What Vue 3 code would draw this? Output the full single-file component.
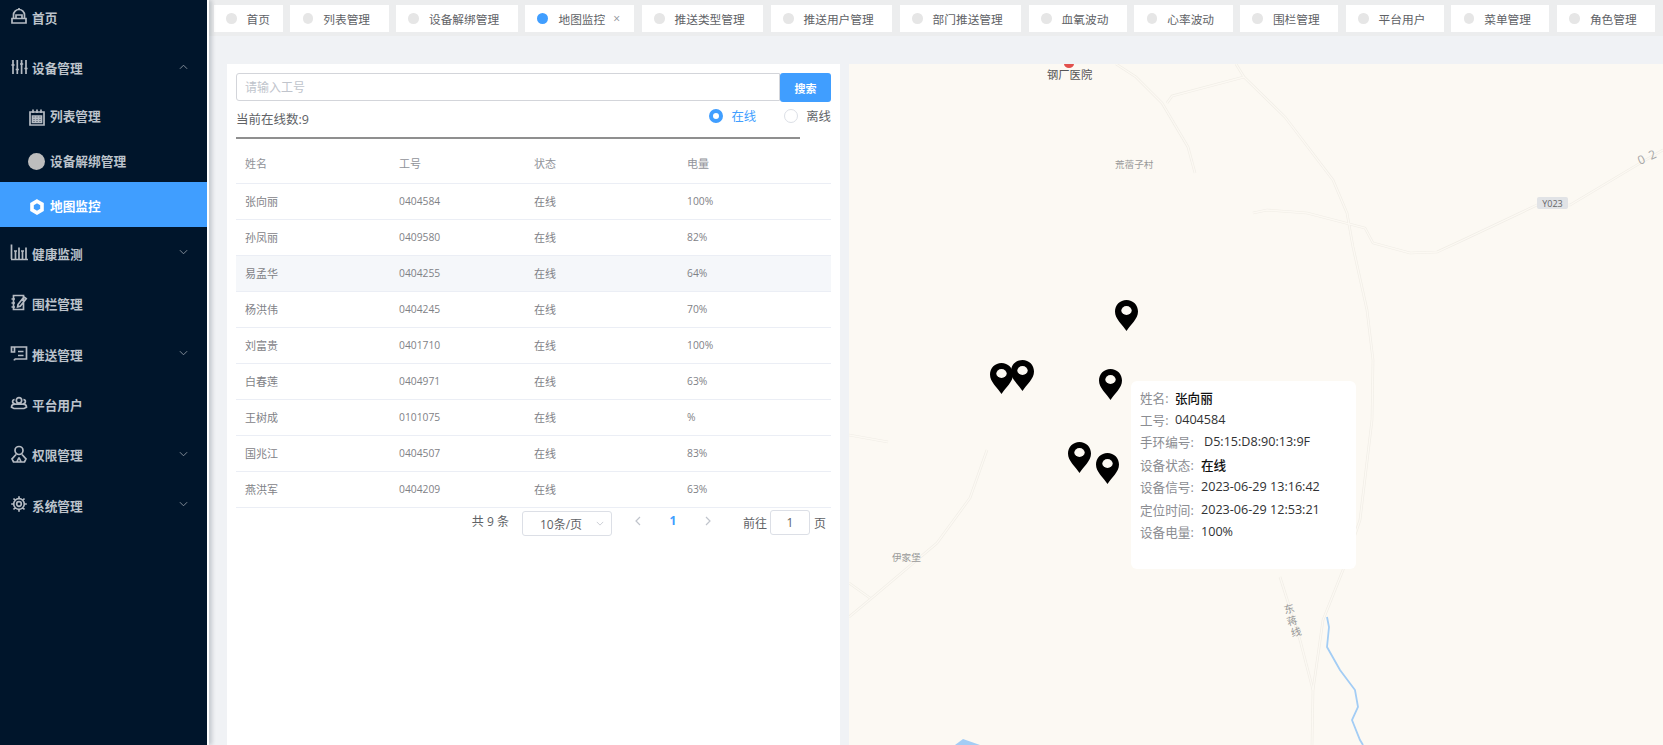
<script setup>
import { ref } from 'vue'

const icons = {
  home: 'M2 16h14v-4.5H2z M3.5 11.5V8a5.5 5.5 0 0 1 11 0v3.5 M9 2.5V1 M6 8h6v3.5H6z',
  sliders: 'M3 2v14M7.3 2v14M11.6 2v14M16 2v14M1.4 7h3.2M5.7 11.5h3.2M10 6h3.2M14.4 10.5h3.2',
  table: 'M2 4h14v13H2z M5 1.5V5M9 1.5V5M13 1.5V5 M4.5 8h9v6.5h-9z M4.5 10.2h9M4.5 12.3h9M7.5 8v6.5M10.5 8v6.5',
  chart: 'M1.5 1.5v14.5M1 16.5h17M5.5 8v8M9 4.5V16M12.5 8v8M16 4.5V16M4 8h3M11 8h3',
  note: 'M3.5 2.5h10v14h-10z M1.5 6h3.5M1.5 10h3.5M1.5 14h3.5 M8 11.5l6-7.5 2.2 1.7-6 7.5-2.6.6z',
  push: 'M4.5 3H16.5V15H4.5 M1.5 3h3v5h-3z M4.5 15v1.5 M8 7.5h5.5 M8 11.5h5.5',
  users: 'M9 3.6a2.7 2.7 0 1 1 0 5.4a2.7 2.7 0 1 1 0-5.4z M4.6 5.6a2 2 0 1 0 0 4 M13.4 5.6a2 2 0 1 1 0 4 M1.5 13.2c0-2 1.8-3 3.5-3h8c1.7 0 3.5 1 3.5 3l-2.5 1.3h-10z',
  person: 'M9 1.5a4 4 0 1 1 0 8a4 4 0 1 1 0-8z M6 9.5l-4 4.5 1.5 3h11l1.5-3-4-4.5 M9 12.5L6.8 17M9 12.5l2.2 4.5',
  gear: 'M9 6.7a2.3 2.3 0 1 1 0 4.6a2.3 2.3 0 1 1 0-4.6z M9 3.7a5.3 5.3 0 1 1 0 10.6a5.3 5.3 0 1 1 0-10.6z M9 1.2v2.5M9 14.3v2.5M1.2 9h2.5M14.3 9h2.5M3.5 3.5l1.8 1.8M12.7 12.7l1.8 1.8M3.5 14.5l1.8-1.8M12.7 5.3l1.8-1.8'
}

const menu = [
  { name: '首页', icon: 'home' },
  { name: '设备管理', icon: 'sliders', arrow: 'up', open: true },
  { name: '健康监测', icon: 'chart', arrow: 'down' },
  { name: '围栏管理', icon: 'note' },
  { name: '推送管理', icon: 'push', arrow: 'down' },
  { name: '平台用户', icon: 'users' },
  { name: '权限管理', icon: 'person', arrow: 'down' },
  { name: '系统管理', icon: 'gear', arrow: 'down' }
]

const tags = [
  { name: '首页', short: true }, { name: '列表管理' }, { name: '设备解绑管理' },
  { name: '地图监控', active: true }, { name: '推送类型管理' }, { name: '推送用户管理' },
  { name: '部门推送管理' }, { name: '血氧波动' }, { name: '心率波动' }, { name: '围栏管理' },
  { name: '平台用户' }, { name: '菜单管理' }, { name: '角色管理' }, { name: '' }
]

const rows = [
  ['张向丽', '0404584', '100%'],
  ['孙凤丽', '0409580', '82%'],
  ['易孟华', '0404255', '64%'],
  ['杨洪伟', '0404245', '70%'],
  ['刘富贵', '0401710', '100%'],
  ['白春莲', '0404971', '63%'],
  ['王树成', '0101075', '%'],
  ['国兆江', '0404507', '83%'],
  ['燕洪军', '0404209', '63%']
]

const hovered = ref(2)

// pin tops/lefts are relative to the map box
const pins = [
  { x: 266, y: 236 }, { x: 141, y: 299 }, { x: 162, y: 296 },
  { x: 250, y: 305 }, { x: 219, y: 378 }, { x: 247, y: 389 }
]

const info = [
  { label: '姓名:', value: '张向丽', strong: true },
  { label: '工号:', value: '0404584' },
  { label: '手环编号:', value: 'D5:15:D8:90:13:9F' },
  { label: '设备状态:', value: '在线', strong: true },
  { label: '设备信号:', value: '2023-06-29 13:16:42' },
  { label: '定位时间:', value: '2023-06-29 12:53:21' },
  { label: '设备电量:', value: '100%' }
]

const roads = [
  'M1116 64L1136 77L1162 103L1188 147L1195 173',
  'M1236 64L1244 77L1285 117L1333 180L1347 213L1353 247L1367 310L1373 360L1372 420L1360 520L1343 570L1323 620L1313 690L1312 745',
  'M1167 103L1172 96L1244 77',
  'M1253 213L1267 210L1307 213L1365 228L1373 243L1410 253L1437 252L1463 240L1537 205L1570 205L1637 165L1663 150',
  'M987 450L970 498L937 543L873 597L849 617',
  'M849 583L870 598',
  'M849 435L888 442',
  'M1280 577L1300 640L1313 690'
]
</script>

<template>
  <div class="layout">
    <aside class="sidebar">
      <ul class="menu">
        <template v-for="item in menu" :key="item.name">
          <li class="menu-item">
            <svg class="ico" viewBox="0 0 18 18"><path :d="icons[item.icon]" /></svg>
            <span class="label">{{ item.name }}</span>
            <svg v-if="item.arrow" class="arrow" viewBox="0 0 10 6">
              <path :d="item.arrow == 'up' ? 'M1 5l4-4 4 4' : 'M1 1l4 4 4-4'" />
            </svg>
          </li>
          <template v-if="item.open">
            <li class="sub-item">
              <svg class="ico" viewBox="0 0 18 18"><path :d="icons.table" /></svg>
              <span class="label">列表管理</span>
            </li>
            <li class="sub-item">
              <span class="dot-ico"></span>
              <span class="label">设备解绑管理</span>
            </li>
            <li class="sub-item active">
              <svg class="ico hex" viewBox="0 0 18 18"><path d="M9 3.2l5 2.9v5.8l-5 2.9-5-2.9V6.100z" /></svg>
              <span class="label">地图监控</span>
            </li>
          </template>
        </template>
      </ul>
    </aside>

    <div class="main">
      <div class="tags">
        <div v-for="t in tags" :key="t.name" class="tag" :class="{ active: t.active, short: t.short }">
          <i class="tag-dot"></i>
          <span>{{ t.name }}</span>
          <span v-if="t.active" class="tag-close">×</span>
        </div>
      </div>

      <div class="content">
        <section class="card">
          <div class="search">
            <input class="search-input" placeholder="请输入工号" />
            <button class="search-btn">搜索</button>
          </div>
          <div class="status">
            <span class="count">当前在线数:9</span>
            <div class="radios">
              <label class="radio on"><i></i>在线</label>
              <label class="radio"><i></i>离线</label>
            </div>
          </div>
          <div class="rule"></div>

          <table class="grid">
            <colgroup>
              <col style="width: 154px" />
              <col style="width: 135px" />
              <col style="width: 153px" />
              <col />
            </colgroup>
            <thead>
              <tr><th>姓名</th><th>工号</th><th>状态</th><th>电量</th></tr>
            </thead>
            <tbody>
              <tr v-for="(r, i) in rows" :key="r[1]" :class="{ hover: hovered == i }">
                <td>{{ r[0] }}</td>
                <td class="num">{{ r[1] }}</td>
                <td>在线</td>
                <td class="num">{{ r[2] }}</td>
              </tr>
            </tbody>
          </table>

          <div class="pager">
            <span class="total">共 9 条</span>
            <div class="size">
              <span>10条/页</span>
              <svg viewBox="0 0 10 6"><path d="M1 1l4 4 4-4" /></svg>
            </div>
            <span class="nav">
              <svg viewBox="0 0 6 10"><path d="M5 1L1 5l4 4" /></svg>
            </span>
            <span class="cur">1</span>
            <span class="nav">
              <svg viewBox="0 0 6 10"><path d="M1 1l4 4-4 4" /></svg>
            </span>
            <span class="goto">前往</span>
            <span class="jump">1</span>
            <span class="page-unit">页</span>
          </div>
        </section>

        <section class="map">
          <svg class="map-base" viewBox="849 64 814 681">
            <g class="road"><path v-for="d in roads" :key="d" :d="d" /></g>
            <g class="road-in"><path v-for="d in roads" :key="d" :d="d" /></g>
            <path class="river" d="M1327 617L1329 627L1327 647L1340 670L1355 690L1358 707L1352 720L1360 740L1363 745" />
            <path class="water" d="M955 745L963 739L980 745z" />
            <path class="hospital" d="M1064 64h10a5 4 0 0 1-10 0z" />
            <rect class="badge" x="1537" y="197" width="31" height="12" rx="2" />
            <text class="t-hospital" x="1047" y="79">钢厂医院</text>
            <text class="t-village" x="1115" y="168">荒蓿子村</text>
            <text class="t-village" x="892" y="561">伊家堡</text>
            <text class="t-badge" x="1552.5" y="206.500">Y023</text>
            <text class="t-line" transform="translate(1640 165) rotate(-25)">0</text>
            <text class="t-line" transform="translate(1651 160) rotate(-25)">2</text>
            <text class="t-road" transform="translate(1285 614) rotate(-15)">东</text>
            <text class="t-road" transform="translate(1288 626) rotate(-15)">蒋</text>
            <text class="t-road" transform="translate(1292 637) rotate(-15)">线</text>
          </svg>

          <svg
            v-for="(p, i) in pins"
            :key="i"
            class="pin"
            viewBox="0 0 23 31"
            :style="{ left: p.x + 'px', top: p.y + 'px' }"
          >
            <path d="M11.5 0C5 0 0 5 0 11.500C0 19 7 24 11.5 31C16 24 23 19 23 11.500C23 5 18 0 11.5 0Z" />
            <ellipse cx="11.5" cy="10.5" rx="5.2" ry="4.4" />
          </svg>

          <div class="info">
            <div v-for="f in info" :key="f.label" class="info-row">
              <span class="info-label">{{ f.label }}</span>
              <span class="info-value" :class="{ strong: f.strong }">{{ f.value }}</span>
            </div>
          </div>
        </section>
      </div>
    </div>
  </div>
</template>

<style>
html, body {
  overflow: hidden;
}
</style>

<style scoped>
* {
  box-sizing: border-box;
}
.layout {
  display: flex;
  height: 745px;
  overflow: hidden;
  font-family: "Open Sans", "Noto Sans CJK SC", sans-serif;
  background: #f0f2f5;
}

/* sidebar */
.sidebar {
  position: relative;
  z-index: 2;
  flex: none;
  width: 209px;
  background: #00152b;
  border-right: 2px solid #fff;
  box-shadow: 3px 0 4px rgba(0, 21, 41, 0.18);
  overflow: hidden;
}
.menu {
  list-style: none;
  margin: -9px 0 0;
  padding: 0;
}
.menu-item,
.sub-item {
  display: flex;
  align-items: center;
  color: #bcc3cb;
  font-size: 12.7px;
  font-weight: 700;
}
.menu-item {
  height: 50.4px;
  padding-left: 10px;
  gap: 4px;
}
.sub-item {
  height: 45px;
  padding-left: 28px;
  gap: 4px;
}
.label {
  padding-top: 2.6px;
}
.ico {
  flex: none;
  width: 18px;
  height: 18px;
  fill: none;
  stroke: #b5bbc3;
  stroke-width: 1.7;
}
.sub-item .ico,
.dot-ico {
  margin-top: 5px;
}
.dot-ico {
  flex: none;
  width: 17px;
  height: 17px;
  margin-right: 1px;
  border-radius: 50%;
  background: #bdbdbd;
}
.arrow {
  width: 9px;
  height: 6px;
  margin-left: auto;
  margin-right: 19px;
  fill: none;
  stroke: #8d97a3;
  stroke-width: 1;
}
.sub-item.active {
  background: #409eff;
  color: #fff;
}
.sub-item .ico.hex {
  stroke: #fff;
  stroke-width: 3.6;
}

/* tag bar */
.main {
  flex: 1;
  min-width: 0;
  display: flex;
  flex-direction: column;
}
.tags {
  flex: none;
  display: flex;
  gap: 7.4px;
  height: 36px;
  padding: 5px 0 0 4.5px;
  background: #ecedee;
  overflow: hidden;
}
.tag {
  flex: none;
  display: flex;
  align-items: center;
  height: 27px;
  padding: 0 18.5px 0 12.5px;
  background: #fff;
  color: #606266;
  font-size: 11.7px;
}
.tag.short {
  padding-right: 13px;
}
.tag.active {
  padding-right: 14px;
}
.tag-dot {
  flex: none;
  width: 10.5px;
  height: 10.5px;
  margin-right: 10px;
  border-radius: 50%;
  background: #e6e6e6;
}
.tag.active .tag-dot {
  background: #409eff;
  width: 11px;
  height: 11px;
}
.tag-close {
  margin-left: 8px;
  color: #909399;
  font-size: 12px;
}

/* left card */
.content {
  flex: 1;
  min-height: 0;
  display: flex;
  gap: 9px;
  padding: 28px 0 0 18px;
}
.card {
  flex: none;
  width: 613px;
  padding: 9px 9px 0;
  background: #fff;
}
.search {
  display: flex;
  height: 29px;
}
.search-input {
  flex: 1;
  height: 28px;
  padding: 0 8px;
  border: 1px solid #d3d5da;
  border-radius: 3px 0 0 3px;
  outline: none;
  font: inherit;
  font-size: 12px;
}
.search-input::placeholder {
  color: #c0c4cc;
}
.search-btn {
  flex: none;
  width: 51px;
  border: none;
  border-radius: 3px;
  background: #409eff;
  color: #fff;
  font: inherit;
  font-size: 11px;
  font-weight: 600;
}
.status {
  display: flex;
  justify-content: space-between;
  height: 35px;
}
.count {
  padding-top: 7px;
  color: #606266;
  font-size: 12.5px;
}
.radios {
  display: flex;
  gap: 28px;
  padding-top: 4px;
}
.radio {
  display: flex;
  align-items: center;
  height: 20px;
  gap: 8px;
  color: #606266;
  font-size: 12.4px;
}
.radio i {
  width: 14px;
  height: 14px;
  border: 1px solid #dcdfe6;
  border-radius: 50%;
  background: #fff;
}
.radio.on {
  color: #409eff;
}
.radio.on i {
  border: 4.5px solid #409eff;
}
.rule {
  width: 564px;
  height: 2px;
  background: #8f8f8f;
}
.grid {
  width: 595px;
  table-layout: fixed;
  border-collapse: separate;
  border-spacing: 0;
  font-size: 11px;
  color: #7f8287;
}
.grid th {
  height: 45px;
  padding: 4px 0 0 9px;
  border-bottom: 1px solid #ebeef5;
  text-align: left;
  font-weight: 400;
  color: #909399;
}
.grid td {
  height: 36px;
  padding: 0 0 2px 9px;
  border-bottom: 1px solid #ebeef5;
}
.grid td.num {
  font-size: 10.3px;
}
.grid tr.hover td {
  background: #f5f7fa;
}

/* pagination */
.pager {
  display: flex;
  align-items: center;
  justify-content: flex-end;
  height: 30px;
  padding: 0 5px 1px 0;
  color: #606266;
  font-size: 12px;
}
.total,
.cur,
.nav {
  margin-bottom: 4px;
}
.size {
  display: flex;
  align-items: center;
  justify-content: space-between;
  width: 90px;
  height: 25px;
  margin: 2px 11px 0 13px;
  padding: 0 7px 0 17px;
  border: 1px solid #dcdfe6;
  border-radius: 3px;
}
.size svg {
  width: 8px;
  height: 5px;
  fill: none;
  stroke: #c0c4cc;
}
.nav {
  display: flex;
  justify-content: center;
  width: 30px;
}
.nav svg {
  width: 6px;
  height: 10px;
  fill: none;
  stroke: #c0c4cc;
  stroke-width: 1.2;
}
.cur {
  width: 40px;
  text-align: center;
  color: #409eff;
  font-weight: 700;
}
.goto {
  margin-left: 20px;
}
.jump {
  width: 40px;
  height: 25px;
  margin: 0 4px 0 3px;
  border: 1px solid #dcdfe6;
  border-radius: 3px;
  line-height: 23px;
  text-align: center;
}

/* map */
.map {
  position: relative;
  flex: 1;
  min-width: 0;
  background: #fcf9f3;
  overflow: hidden;
}
.map-base {
  position: absolute;
  left: 0;
  top: 0;
  width: 814px;
  height: 681px;
  font-family: "Open Sans", "Noto Sans CJK SC", sans-serif;
}
.road path {
  fill: none;
  stroke: #f0ede6;
  stroke-width: 2.6;
}
.road-in path {
  fill: none;
  stroke: #fcf9f3;
  stroke-width: 1.3;
}
.river {
  fill: none;
  stroke: #a3cdf5;
  stroke-width: 1.8;
}
.water {
  fill: #a3cdf5;
}
.hospital {
  fill: #e2504c;
}
.badge {
  fill: #e1e3e6;
}
.t-hospital {
  fill: #555;
  font-size: 11.3px;
}
.t-village {
  fill: #999;
  font-size: 9.6px;
}
.t-badge {
  fill: #666;
  font-size: 9px;
  text-anchor: middle;
}
.t-line {
  fill: #a5a5a5;
  font-size: 12px;
}
.t-road {
  fill: #999;
  font-size: 10.5px;
}
.pin {
  position: absolute;
  width: 23px;
  height: 31px;
}
.pin path {
  fill: #000;
}
.pin ellipse {
  fill: #fcf9f3;
}
.info {
  position: absolute;
  left: 282px;
  top: 317px;
  width: 225px;
  height: 188px;
  padding: 5px 9px;
  background: #fff;
  border-radius: 6px;
}
.info-row {
  display: flex;
  align-items: center;
  height: 22.4px;
  font-size: 12.6px;
}
.info-label {
  width: 61px;
  flex: none;
  color: #8b8d92;
  white-space: nowrap;
}
.info-value {
  color: #303133;
  white-space: nowrap;
}
.info-value.strong {
  color: #111;
  font-weight: 500;
}
.info-row:nth-child(-n+2) .info-label {
  width: 35px;
}
.info-row:nth-child(3) .info-label {
  width: 64px;
}
</style>
